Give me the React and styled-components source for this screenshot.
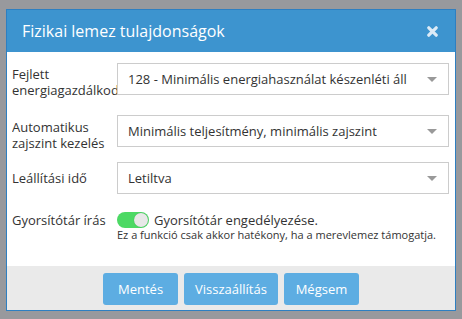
import React from "react";
import styled, { createGlobalStyle } from "styled-components";

const GlobalStyle = createGlobalStyle`
  html, body { margin: 0; padding: 0; }
  body {
    background: #98999d;
    font-family: "Open Sans", "DejaVu Sans", sans-serif;
  }
  * { box-sizing: border-box; }
`;

const Page = styled.div`
  padding: 9px 6px 8px 6px;
`;

const Dialog = styled.div`
  width: 450px;
  height: 302px;
  border: 1px solid #2e7fc1;
  background: #fff;
  display: flex;
  flex-direction: column;
`;

const Header = styled.div`
  height: 42px;
  flex: none;
  background: #3d94cf;
  display: flex;
  align-items: center;
  justify-content: space-between;
  padding: 0 17px 0 15px;
`;

const Title = styled.div`
  color: #fff;
  font-size: 16px;
  font-weight: 400;
`;

const CloseButton = styled.button`
  border: 0;
  background: none;
  padding: 0;
  width: 11px;
  height: 11px;
  display: flex;
  cursor: pointer;
`;

const Body = styled.div`
  flex: 1;
  padding: 11px 6px 0 5px;
`;

const Row = styled.div`
  display: grid;
  grid-template-columns: 105px 1fr;
  align-items: start;
  margin-bottom: ${(p) => p.$mb || 0}px;
`;

const Label = styled.div`
  padding-top: ${(p) => p.$pt || 0}px;
  font-size: 13px;
  line-height: 16px;
  color: #333;
  overflow: hidden;
`;

const Select = styled.div`
  height: 32px;
  border: 1px solid #ccc;
  background: #fff;
  display: flex;
  align-items: center;
  justify-content: space-between;
  padding: 0 11px 0 10px;
  font-size: 13px;
  color: #333;
`;

const SelectText = styled.span`
  white-space: nowrap;
  overflow: hidden;
`;

const Caret = styled.span`
  width: 0;
  height: 0;
  flex: none;
  border-left: 5px solid transparent;
  border-right: 5px solid transparent;
  border-top: 5px solid #999;
`;

const ToggleLine = styled.div`
  display: flex;
  align-items: center;
  gap: 5px;
  font-size: 13px;
  line-height: 16px;
  color: #333;
`;

const Switch = styled.span`
  position: relative;
  width: 32px;
  height: 16px;
  border-radius: 8px;
  background: ${(p) => (p.$on ? "#4cd964" : "#ccc")};
  flex: none;
  &::after {
    content: "";
    position: absolute;
    top: 1px;
    left: ${(p) => (p.$on ? "17px" : "1px")};
    width: 14px;
    height: 14px;
    border-radius: 50%;
    background: #e8e8e8;
    box-shadow: 0 0 1px rgba(0, 0, 0, 0.25);
  }
`;

const Hint = styled.div`
  font-size: 11px;
  line-height: 14px;
  color: #333;
`;

const Footer = styled.div`
  height: 44px;
  flex: none;
  background: #eaeaea;
  display: flex;
  justify-content: center;
  align-items: flex-start;
  gap: 6px;
  padding-top: 7px;
`;

const Button = styled.button`
  height: 32px;
  min-width: 75px;
  padding: 0 11px;
  border: 0;
  border-radius: 3px;
  background: #5dade2;
  color: #fff;
  font-family: "Open Sans", "DejaVu Sans", sans-serif;
  font-size: 13px;
  cursor: pointer;
`;

const rows = [
  { label: "Fejlett energiagazdálkodás", value: "128 - Minimális energiahasználat készenléti áll", pt: 3, mb: 17 },
  { label: "Automatikus zajszint kezelés", value: "Minimális teljesítmény, minimális zajszint", pt: 4, mb: 11 },
  { label: "Leállítási idő", value: "Letiltva", pt: 8, mb: 18 },
];

export default function App() {
  return (
    <>
      <GlobalStyle />
      <Page>
        <Dialog>
          <Header>
            <Title>Fizikai lemez tulajdonságok</Title>
            <CloseButton aria-label="Bezárás">
              <svg width="11" height="11" viewBox="0 0 11 11">
                <path d="M1.8 1.8 L9.2 9.2 M9.2 1.8 L1.8 9.2" stroke="#dcebf7" strokeWidth="3.2" strokeLinecap="round" />
              </svg>
            </CloseButton>
          </Header>
          <Body>
            {rows.map((r) => (
              <Row key={r.label} $mb={r.mb}>
                <Label $pt={r.pt}>{r.label}</Label>
                <Select>
                  <SelectText>{r.value}</SelectText>
                  <Caret />
                </Select>
              </Row>
            ))}
            <Row>
              <Label>Gyorsítótár írás</Label>
              <div>
                <ToggleLine>
                  <Switch $on />
                  <span>Gyorsítótár engedélyezése.</span>
                </ToggleLine>
                <Hint>Ez a funkció csak akkor hatékony, ha a merevlemez támogatja.</Hint>
              </div>
            </Row>
          </Body>
          <Footer>
            <Button>Mentés</Button>
            <Button>Visszaállítás</Button>
            <Button>Mégsem</Button>
          </Footer>
        </Dialog>
      </Page>
    </>
  );
}
